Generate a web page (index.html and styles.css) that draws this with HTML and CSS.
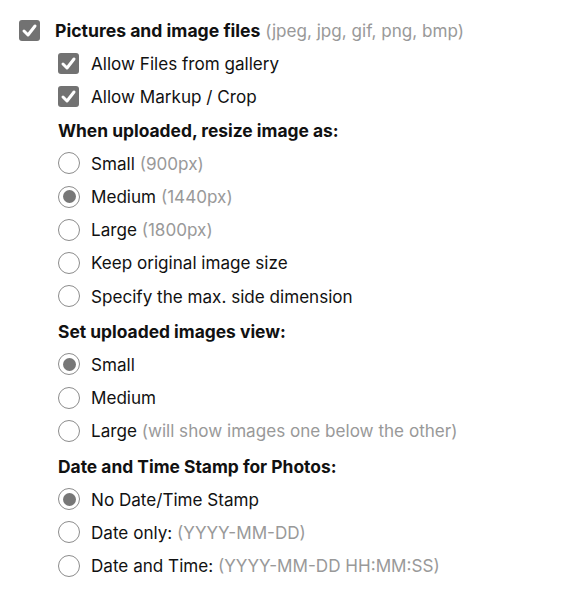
FILE: index.html
```html
<!DOCTYPE html>
<html>
<head>
<meta charset="utf-8">
<link rel="stylesheet" href="styles.css">
</head>
<body>
<div class="panel">
  <div class="row top">
    <span class="box"><svg viewBox="0 0 21 21" width="21" height="21"><rect x="0" y="0" width="21" height="21" rx="3" fill="#727272"/><path d="M5 11 L9 15 L16 6" fill="none" stroke="#fff" stroke-width="3" stroke-linecap="round" stroke-linejoin="round"/></svg></span>
    <span class="label"><b>Pictures and image files</b> <span class="hint">(jpeg, jpg, gif, png, bmp)</span></span>
  </div>
  <div class="sub">
    <div class="row">
      <span class="box"><svg viewBox="0 0 21 21" width="21" height="21"><rect x="0" y="0" width="21" height="21" rx="3" fill="#727272"/><path d="M5 11 L9 15 L16 6" fill="none" stroke="#fff" stroke-width="3" stroke-linecap="round" stroke-linejoin="round"/></svg></span>
      <span class="label">Allow Files from gallery</span>
    </div>
    <div class="row">
      <span class="box"><svg viewBox="0 0 21 21" width="21" height="21"><rect x="0" y="0" width="21" height="21" rx="3" fill="#727272"/><path d="M5 11 L9 15 L16 6" fill="none" stroke="#fff" stroke-width="3" stroke-linecap="round" stroke-linejoin="round"/></svg></span>
      <span class="label">Allow Markup / Crop</span>
    </div>

    <div class="row heading">When uploaded, resize image as:</div>
    <div class="row"><span class="radio"></span><span class="label">Small <span class="hint">(900px)</span></span></div>
    <div class="row"><span class="radio on"></span><span class="label">Medium <span class="hint">(1440px)</span></span></div>
    <div class="row"><span class="radio"></span><span class="label">Large <span class="hint">(1800px)</span></span></div>
    <div class="row"><span class="radio"></span><span class="label">Keep original image size</span></div>
    <div class="row"><span class="radio"></span><span class="label">Specify the max. side dimension</span></div>

    <div class="row heading gap">Set uploaded images view:</div>
    <div class="row"><span class="radio on"></span><span class="label">Small</span></div>
    <div class="row"><span class="radio"></span><span class="label">Medium</span></div>
    <div class="row"><span class="radio"></span><span class="label">Large <span class="hint">(will show images one below the other)</span></span></div>

    <div class="row heading gap">Date and Time Stamp for Photos:</div>
    <div class="row"><span class="radio on"></span><span class="label">No Date/Time Stamp</span></div>
    <div class="row"><span class="radio"></span><span class="label">Date only: <span class="hint">(YYYY-MM-DD)</span></span></div>
    <div class="row"><span class="radio"></span><span class="label">Date and Time: <span class="hint">(YYYY-MM-DD HH:MM:SS)</span></span></div>
  </div>
</div>
</body>
</html>
```

FILE: styles.css
```css
html, body {
  margin: 0;
  padding: 0;
  background: #fff;
}
body {
  font-family: Inter, "Noto Sans", sans-serif;
  font-size: 17.1px;
  color: #111;
}
.panel {
  padding: 14px 0 0 19px;
}
.row {
  display: flex;
  align-items: center;
  height: 33.2px;
}
.box {
  display: flex;
  width: 21px;
  height: 21px;
  margin-right: 12px;
}
.top .box {
  margin-right: 15px;
}
.top b {
  font-weight: 700;
  font-size: 17.6px;
}
.sub {
  padding-left: 39px;
}
.hint {
  color: #999;
  font-weight: 400;
}
.heading {
  font-weight: 700;
  font-size: 17.4px;
}
.gap {
  margin-top: 2px;
}
.radio {
  box-sizing: border-box;
  width: 22px;
  height: 22px;
  border: 1.5px solid #8c8c8c;
  border-radius: 50%;
  margin-right: 11px;
  display: flex;
  align-items: center;
  justify-content: center;
}
.radio.on::after {
  content: "";
  width: 13px;
  height: 13px;
  border-radius: 50%;
  background: #777;
}
```
